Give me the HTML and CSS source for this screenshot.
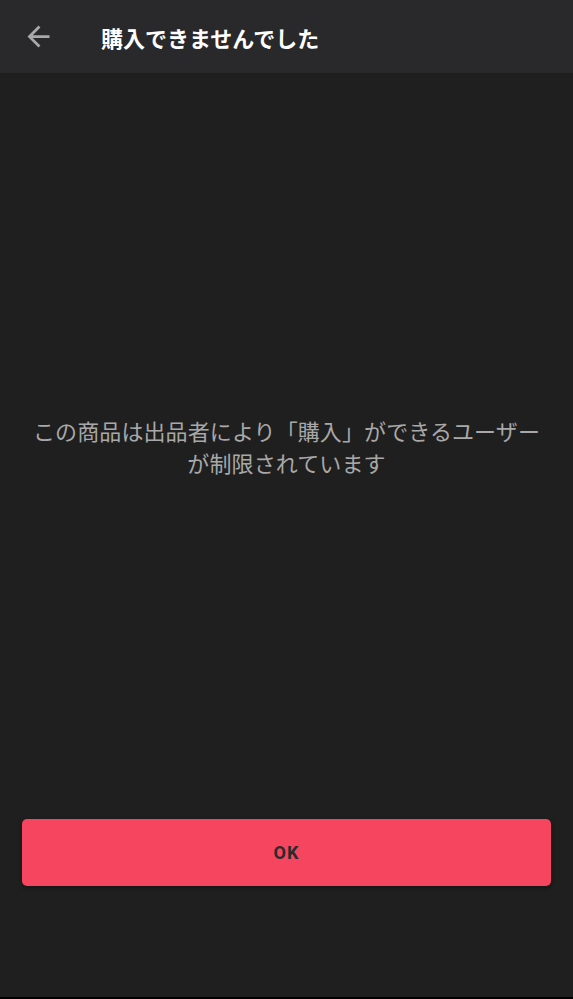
FILE: index.html
```html
<!DOCTYPE html>
<html lang="ja">
<head>
<meta charset="utf-8">
<title>購入できませんでした</title>
<link rel="stylesheet" href="styles.css">
</head>
<body>
<div class="screen">
  <header class="appbar">
    <button class="back" aria-label="戻る">
      <svg viewBox="0 0 24 24" width="33" height="33"><path d="M20 11H7.83l5.59-5.59L12 4l-8 8 8 8 1.41-1.41L7.83 13H20v-2z" fill="currentColor"/></svg>
    </button>
    <h1 class="title">購入できませんでした</h1>
  </header>
  <main class="content">
    <p class="message">この商品は出品者により「購入」ができるユーザー<br>が制限されています</p>
  </main>
  <div class="actions">
    <button class="ok">OK</button>
  </div>
  <div class="navstrip"></div>
</div>
</body>
</html>
```

FILE: styles.css
```css
* { box-sizing: border-box; }
html, body { margin: 0; padding: 0; }
body {
  background: #1f1f1f;
  font-family: "Noto Sans CJK JP", "Noto Sans", sans-serif;
}
.screen {
  display: flex;
  flex-direction: column;
  height: 999px;
  width: 573px;
}
.appbar {
  height: 73px;
  flex: 0 0 73px;
  background: #29292b;
  display: flex;
  align-items: center;
  padding-left: 22px;
}
.back {
  width: 33px;
  height: 33px;
  padding: 0;
  border: 0;
  background: none;
  color: #a9a9a9;
  display: flex;
  margin-top: -1px;
}
.title {
  margin: 0 0 0 46px;
  font-size: 22px;
  font-weight: 700;
  color: #ffffff;
  line-height: 1;
}
.content {
  flex: 1;
  display: flex;
  align-items: center;
  justify-content: center;
}
.message {
  margin: 0;
  text-align: center;
  font-size: 22px;
  letter-spacing: 0.1px;
  line-height: 32px;
  color: #a8a8a8;
}
.actions {
  padding: 0 22px 111px;
}
.ok {
  width: 100%;
  height: 67px;
  border: 0;
  border-radius: 5px;
  background: #f6455f;
  color: #2a2a2a;
  font-family: Roboto, "Noto Sans", sans-serif;
  font-weight: 700;
  font-size: 18px;
  letter-spacing: 1px;
  box-shadow: 0 2px 4px rgba(0,0,0,0.35);
}
.navstrip {
  height: 2px;
  flex: 0 0 2px;
  background: #000;
}
```
